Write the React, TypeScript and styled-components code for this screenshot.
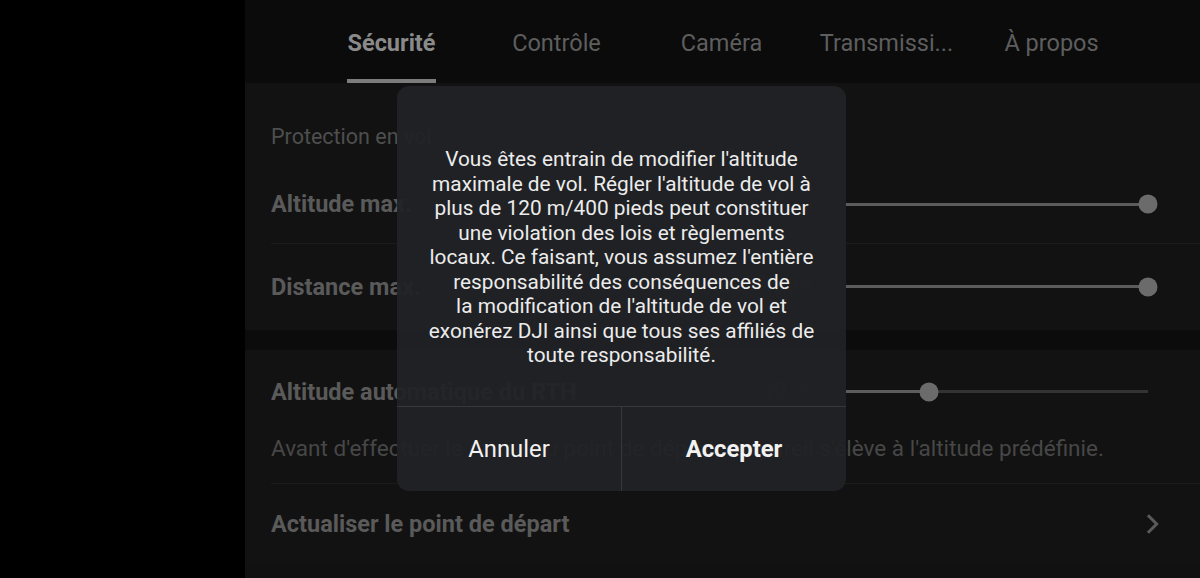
import React from 'react';
import styled, { createGlobalStyle } from 'styled-components';

const tabs = ['Sécurité', 'Contrôle', 'Caméra', 'Transmissi...', 'À propos'];

const dialogLines = [
    "Vous êtes entrain de modifier l'altitude",
    "maximale de vol. Régler l'altitude de vol à",
    'plus de 120 m/400 pieds peut constituer',
    'une violation des lois et règlements',
    "locaux. Ce faisant, vous assumez l'entière",
    'responsabilité des conséquences de',
    "la modification de l'altitude de vol et",
    'exonérez DJI ainsi que tous ses affiliés de',
    'toute responsabilité.',
];

interface ISliderProps {
    percent: number;
}

const Slider = ({ percent }: ISliderProps) => (
    <SliderWrapper>
        <Track>
            <Fill style={{ width: `${percent}%` }} />
        </Track>
        <Thumb style={{ left: `${percent}%` }} />
    </SliderWrapper>
);

const App = () => {
    return (
        <>
            <GlobalStyle />
            <Screen>
                <LeftBlank />
                <Panel>
                    <TabBar>
                        {tabs.map((tab, i) => (
                            <Tab key={tab}>
                                <TabLabel active={i === 0}>{tab}</TabLabel>
                            </Tab>
                        ))}
                    </TabBar>
                    <Card>
                        <SectionTitle>Protection en vol</SectionTitle>
                        <Row height={79} divider>
                            <Label>Altitude max.</Label>
                            <Value>500 m</Value>
                            <Slider percent={100} />
                        </Row>
                        <Row height={86}>
                            <Label>Distance max.</Label>
                            <Value>Aucune limite</Value>
                            <Slider percent={100} />
                        </Row>
                    </Card>
                    <Gap />
                    <Card>
                        <Row height={84}>
                            <Label>Altitude automatique du RTH</Label>
                            <Value>49 m</Value>
                            <Slider percent={27.5} />
                        </Row>
                        <Description>
                            Avant d'effectuer le retour au point de départ, l'appareil s'élève à l'altitude prédéfinie.
                        </Description>
                        <Row height={80}>
                            <Label>Actualiser le point de départ</Label>
                            <Chevron viewBox="0 0 24 24">
                                <path d="M8.5 4.5l7.5 7.5-7.5 7.5" />
                            </Chevron>
                        </Row>
                    </Card>
                    <Dialog>
                        <Message>
                            {dialogLines.map((line) => (
                                <span key={line}>{line}</span>
                            ))}
                        </Message>
                        <ButtonRow>
                            <DialogButton>Annuler</DialogButton>
                            <DialogButton primary>Accepter</DialogButton>
                        </ButtonRow>
                    </Dialog>
                </Panel>
            </Screen>
        </>
    );
};

export default App;

const GlobalStyle = createGlobalStyle`
    body {
        margin: 0;
        background: #000;
        font-family: Roboto, "Noto Sans", sans-serif;
    }
`;

const Screen = styled.div`
    display: flex;
    width: 1200px;
    height: 578px;
    overflow: hidden;
`;

const LeftBlank = styled.div`
    width: 245px;
    background: #000;
`;

const Panel = styled.div`
    position: relative;
    flex: 1;
    display: flex;
    flex-direction: column;
    background: #111;
`;

const TabBar = styled.div`
    display: flex;
    height: 83px;
    padding-left: 64px;
    background: #0b0b0b;
`;

const Tab = styled.div`
    width: 165px;
    display: flex;
    justify-content: center;
`;

const TabLabel = styled.div<{ active: boolean }>`
    display: flex;
    align-items: center;
    box-sizing: border-box;
    height: 83px;
    padding-top: 6px;
    font-size: 23.5px;
    font-weight: ${({ active }) => (active ? 700 : 400)};
    color: ${({ active }) => (active ? '#8a8a8a' : '#5e5e5e')};
    border-bottom: 4px solid ${({ active }) => (active ? '#7c7c7c' : 'transparent')};
`;

const Card = styled.div`
    display: flex;
    flex-direction: column;
    padding-left: 26px;
    background: #121212;
`;

const Gap = styled.div`
    height: 20px;
    background: #0c0c0c;
`;

const SectionTitle = styled.div`
    box-sizing: border-box;
    height: 82px;
    padding-top: 40px;
    line-height: 28px;
    font-size: 21.5px;
    color: #4e4e4e;
`;

const Row = styled.div<{ height: number; divider?: boolean }>`
    display: flex;
    align-items: center;
    box-sizing: border-box;
    height: ${({ height }) => height}px;
    padding-right: 38px;
    border-bottom: 1px solid ${({ divider }) => (divider ? '#1c1c1c' : 'transparent')};
`;

const Label = styled.div`
    flex: 1;
    font-size: 23.5px;
    font-weight: 700;
    color: #5a5a5a;
`;

const Value = styled.div`
    font-size: 23px;
    color: #2c2c2c;
    margin-right: 33px;
`;

const SliderWrapper = styled.div`
    position: relative;
    display: flex;
    align-items: center;
    width: 302px;
    height: 20px;
    margin-right: 14px;
`;

const Track = styled.div`
    width: 100%;
    height: 3px;
    background: #333;
`;

const Fill = styled.div`
    height: 100%;
    background: #5c5c5c;
`;

const Thumb = styled.div`
    position: absolute;
    top: 50%;
    width: 19px;
    height: 19px;
    border-radius: 50%;
    background: #6b6b6b;
    transform: translate(-50%, -50%);
`;

const Description = styled.div`
    box-sizing: border-box;
    height: 50px;
    line-height: 28px;
    font-size: 22.5px;
    color: #474747;
    white-space: nowrap;
    border-bottom: 1px solid #1c1c1c;
`;

const Chevron = styled.svg`
    width: 28px;
    height: 28px;
    fill: none;
    stroke: #5a5a5a;
    stroke-width: 2.6;
    margin-right: -4px;
`;

const Dialog = styled.div`
    position: absolute;
    left: 152px;
    top: 86px;
    width: 449px;
    height: 405px;
    display: flex;
    flex-direction: column;
    background: rgba(33, 34, 37, 0.94);
    border-radius: 12px;
    overflow: hidden;
`;

const Message = styled.div`
    flex: 1;
    display: flex;
    flex-direction: column;
    align-items: center;
    padding-top: 61px;
    font-size: 20.8px;
    line-height: 24.5px;
    color: #ececec;
    text-align: center;
    white-space: nowrap;
`;

const ButtonRow = styled.div`
    display: flex;
    height: 84px;
    border-top: 1px solid #37383b;
`;

const DialogButton = styled.div<{ primary?: boolean }>`
    flex: 1;
    display: flex;
    align-items: center;
    justify-content: center;
    font-size: 23.8px;
    font-weight: ${({ primary }) => (primary ? 700 : 400)};
    color: #f2f2f2;
    & + & {
        border-left: 1px solid #37383b;
    }
`;
